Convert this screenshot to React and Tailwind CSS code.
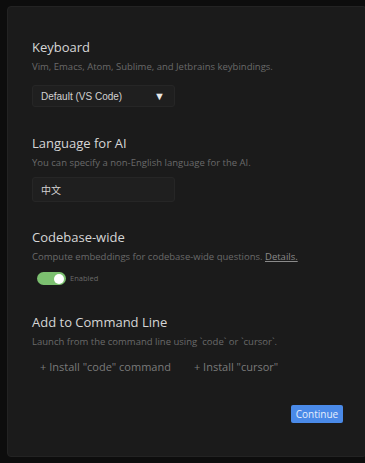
const font = { fontFamily: '"Open Sans", "Noto Sans", "Noto Sans CJK SC", sans-serif' };

function Section({ title, desc, children }) {
    return (
        <div>
            <h3 className="text-[13px] leading-[18px] text-[#d6d6d6]">{title}</h3>
            <p className="mt-[4px] text-[9.5px] leading-[13px] text-[#6a6a6a]">{desc}</p>
            {children}
        </div>
    );
}

export default function App() {
    return (
        <div className="h-[463px] w-[365px] bg-[#0d0d0d] pl-[7px] pt-[6px] overflow-hidden" style={font}>
            <div className="h-[451px] w-[360px] rounded-[4px] bg-[#1b1b1b] border border-[#232323] pl-[24px] pr-[22px] pt-[31px]">
                <Section title="Keyboard" desc="Vim, Emacs, Atom, Sublime, and Jetbrains keybindings.">
                    <div className="mt-[12px] flex h-[22px] w-[143px] items-center justify-between rounded-[3px] border border-[#262626] bg-[#1f1f1f] pl-[8px] pr-[9px] text-[10px] text-[#d2d2d2]" style={{ fontFamily: '"Liberation Sans", Arial, sans-serif' }}>
                        <span>Default (VS Code)</span>
                        <span className="text-[11px] text-[#e8e8e8]">▼</span>
                    </div>
                </Section>

                <div className="mt-[27px]">
                    <Section title="Language for AI" desc="You can specify a non-English language for the AI.">
                        <div className="mt-[8px] flex h-[25px] w-[143px] items-center rounded-[3px] border border-[#262626] bg-[#1f1f1f] pl-[8px] text-[10px] text-[#d2d2d2]" style={{ fontFamily: '"Noto Sans CJK SC", sans-serif' }}>
                            中文
                        </div>
                    </Section>
                </div>

                <div className="mt-[26px]">
                    <Section title="Codebase-wide" desc={<>Compute embeddings for codebase-wide questions. <span className="underline text-[#8a8a8a]">Details.</span></>}>
                        <div className="mt-[9px] ml-[5px] flex items-center gap-[4px]">
                            <div className="flex h-[13px] w-[29px] items-center justify-end rounded-full bg-[#7cc070] pr-[2px]">
                                <div className="h-[10px] w-[10px] rounded-full bg-white" />
                            </div>
                            <span className="text-[7.5px] leading-[13px] text-[#6a6a6a]">Enabled</span>
                        </div>
                    </Section>
                </div>

                <div className="mt-[28px]">
                    <Section title="Add to Command Line" desc="Launch from the command line using `code` or `cursor`.">
                        <div className="mt-[11px] flex gap-[23px] pl-[8px] text-[11px] leading-[15px] text-[#7a7a7a]">
                            <span>+ Install "code" command</span>
                            <span>+ Install "cursor"</span>
                        </div>
                    </Section>
                </div>

                <div className="mt-[31px] flex justify-end">
                    <button className="mr-[1px] h-[18px] w-[52px] rounded-[2px] bg-[#4a8ae8] text-[10px] leading-[18px] text-[#e6eefc]">Continue</button>
                </div>
            </div>
        </div>
    );
}
